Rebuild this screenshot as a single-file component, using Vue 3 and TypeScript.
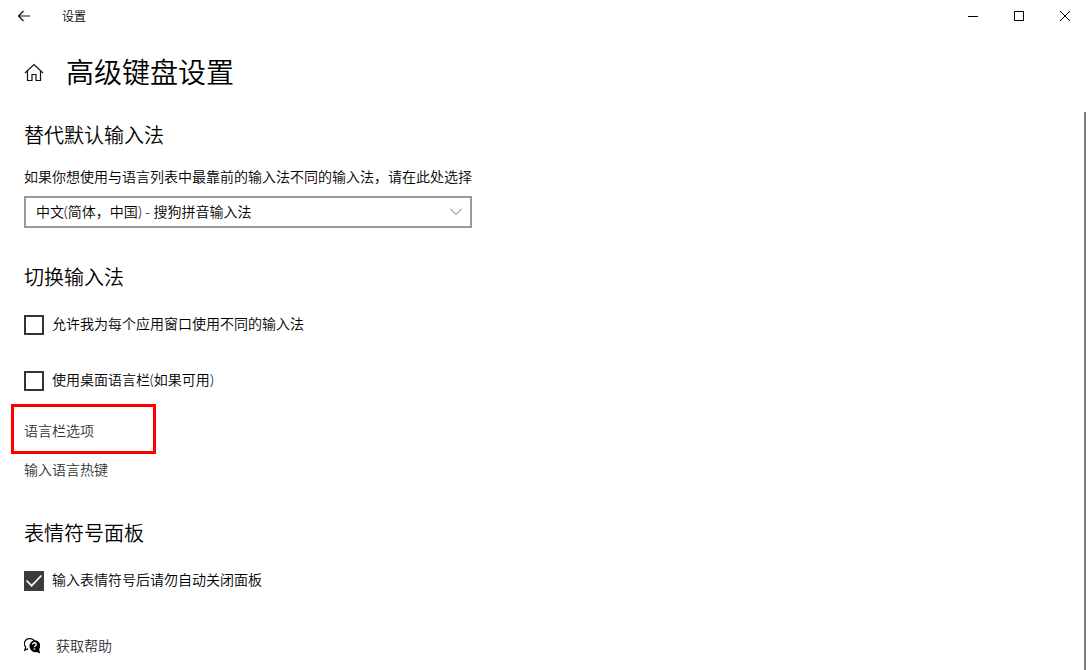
<script setup lang="ts">
import { ref } from 'vue'

const inputMethods = ['中文(简体，中国) - 搜狗拼音输入法']
const selectedMethod = ref(inputMethods[0])
const perAppInput = ref(false)
const desktopBar = ref(false)
const keepPanelOpen = ref(true)
</script>

<template>
  <div class="window">
    <header class="titlebar">
      <button class="back" type="button" aria-label="返回">
        <svg width="14" height="14" viewBox="0 0 14 14" fill="none" stroke="#111" stroke-width="1.2">
          <path d="M13 7H1.5M6.5 2L1.5 7L6.5 12" />
        </svg>
      </button>
      <span class="app-name">设置</span>
      <div class="controls">
        <button type="button" aria-label="最小化">
          <svg width="10" height="10" viewBox="0 0 10 10" stroke="#000"><path d="M0 5.5H10" /></svg>
        </button>
        <button type="button" aria-label="最大化">
          <svg width="10" height="10" viewBox="0 0 10 10" fill="none" stroke="#000"><path d="M.5.5h9v9h-9z" /></svg>
        </button>
        <button type="button" aria-label="关闭">
          <svg width="10" height="10" viewBox="0 0 10 10" stroke="#000"><path d="M0 0L10 10M10 0L0 10" /></svg>
        </button>
      </div>
    </header>

    <div class="page-head">
      <button class="home" type="button" aria-label="主页">
        <svg width="20" height="20" viewBox="0 0 20 20" fill="none" stroke="#111" stroke-width="1.2">
          <path d="M1 11L10 2.5L19 11M3.5 9V18.5H8V12.5H12V18.5H16.5V9" />
        </svg>
      </button>
      <h1>高级键盘设置</h1>
    </div>

    <div class="body">
      <main>
        <section class="override">
          <h2>替代默认输入法</h2>
          <label class="caption" for="method">如果你想使用与语言列表中最靠前的输入法不同的输入法，请在此处选择</label>
          <div class="combo">
            <select id="method" v-model="selectedMethod">
              <option v-for="m in inputMethods" :key="m" :value="m">{{ m }}</option>
            </select>
            <svg class="chevron" width="12" height="8" viewBox="0 0 12 8" fill="none" stroke="#666">
              <path d="M.5 1L6 6.5L11.5 1" />
            </svg>
          </div>
        </section>

        <section class="switching">
          <h2>切换输入法</h2>
          <label class="check"><input v-model="perAppInput" type="checkbox" /><span>允许我为每个应用窗口使用不同的输入法</span></label>
          <label class="check"><input v-model="desktopBar" type="checkbox" /><span>使用桌面语言栏(如果可用)</span></label>
          <nav class="links">
            <a class="marked" href="#bar">语言栏选项</a>
            <a href="#hotkeys">输入语言热键</a>
          </nav>
        </section>

        <section class="emoji">
          <h2>表情符号面板</h2>
          <label class="check"><input v-model="keepPanelOpen" type="checkbox" /><span>输入表情符号后请勿自动关闭面板</span></label>
        </section>

        <a class="help" href="#help">
          <svg width="16" height="16" viewBox="0 0 16 16">
            <path d="M4 10.6L.8 12.2L1.6 8.8A4.9 4.9 0 0 1 5.6 .7C8 .5 9.7 1.5 10.4 3" fill="none" stroke="#000" stroke-width="1.2" />
            <path d="M10.4 2.2a5.6 5.6 0 0 1 4.8 8.8l.8 4.5-3.4-1.4A5.8 5.8 0 1 1 10.4 2.2z" fill="#000" />
            <path d="M8.6 6.4c0-2.2 3.7-2.2 3.7 0 0 1.4-1.8 1.2-1.8 2.8" fill="none" stroke="#fff" stroke-width="1.3" />
            <path d="M9.8 10.3h1.4v1.4H9.8z" fill="#fff" />
          </svg>
          <span>获取帮助</span>
        </a>
      </main>
      <div class="scrollbar"></div>
    </div>
  </div>
</template>

<style>
body {
  background: #fff;
}
</style>

<style scoped>
.window {
  display: flex;
  flex-direction: column;
  height: 100vh;
  overflow: hidden;
  background: #fff;
  color: #000;
  font: 350 14px/20px "Open Sans", "Noto Sans CJK SC", sans-serif;
}

button {
  display: flex;
  align-items: center;
  justify-content: center;
  padding: 0;
  border: 0;
  background: none;
}

.titlebar {
  display: flex;
  flex: none;
  align-items: center;
  height: 32px;
}

.back {
  width: 48px;
  height: 32px;
}

.app-name {
  flex: 1;
  padding: 2px 0 0 14px;
  font-size: 12px;
}

.controls {
  display: flex;
}

.controls button {
  width: 46px;
  height: 32px;
}

.page-head {
  display: flex;
  flex: none;
  align-items: center;
  gap: 22px;
  height: 80px;
  padding-left: 24px;
}

h1,
h2 {
  margin: 0;
  font-weight: 350;
}

h1 {
  font-size: 28px;
  line-height: 40px;
}

h2 {
  font-size: 20px;
  line-height: 28px;
}

.body {
  display: flex;
  flex: 1;
  min-height: 0;
}

main {
  flex: 1;
  padding: 10px 24px 0;
}

.scrollbar {
  width: 2px;
  margin-right: 2px;
  background: #7a7a7a;
}

.caption {
  display: block;
  margin-top: 17px;
}

.combo {
  position: relative;
  max-width: 448px;
  margin-top: 9px;
}

select {
  display: block;
  width: 100%;
  height: 32px;
  padding: 0 32px 0 10px;
  border: 2px solid #999;
  border-radius: 0;
  appearance: none;
  background: #fff;
  color: #000;
  font: inherit;
}

.chevron {
  position: absolute;
  top: 12px;
  right: 10px;
  pointer-events: none;
}

.switching {
  margin-top: 36px;
}

.check {
  display: flex;
  align-items: flex-start;
  gap: 8px;
  width: fit-content;
  margin-top: 36px;
  line-height: 18px;
}

h2 + .check {
  margin-top: 23px;
}

.check input {
  display: grid;
  flex: none;
  place-items: center;
  width: 20px;
  height: 20px;
  margin: 0;
  border: 2px solid #333;
  appearance: none;
  background: #fff;
}

.check input:checked {
  border-color: #3c3c3c;
  background: #3c3c3c;
}

.check input:checked::before {
  width: 16px;
  height: 12px;
  background: #fff;
  clip-path: polygon(0 50%, 7% 42%, 35% 80%, 93% 0, 100% 8%, 35% 100%);
  content: "";
}

.links {
  display: flex;
  flex-direction: column;
  align-items: flex-start;
  gap: 19px;
  margin-top: 30px;
}

a {
  color: #333;
  text-decoration: none;
}

.marked {
  position: relative;
}

.marked::after {
  position: absolute;
  inset: -17px -62px -13px -13px;
  border: 3px solid #f00;
  content: "";
  pointer-events: none;
}

.emoji {
  margin-top: 40px;
}

.help {
  display: flex;
  align-items: center;
  gap: 16px;
  width: fit-content;
  margin-top: 45px;
}
</style>
